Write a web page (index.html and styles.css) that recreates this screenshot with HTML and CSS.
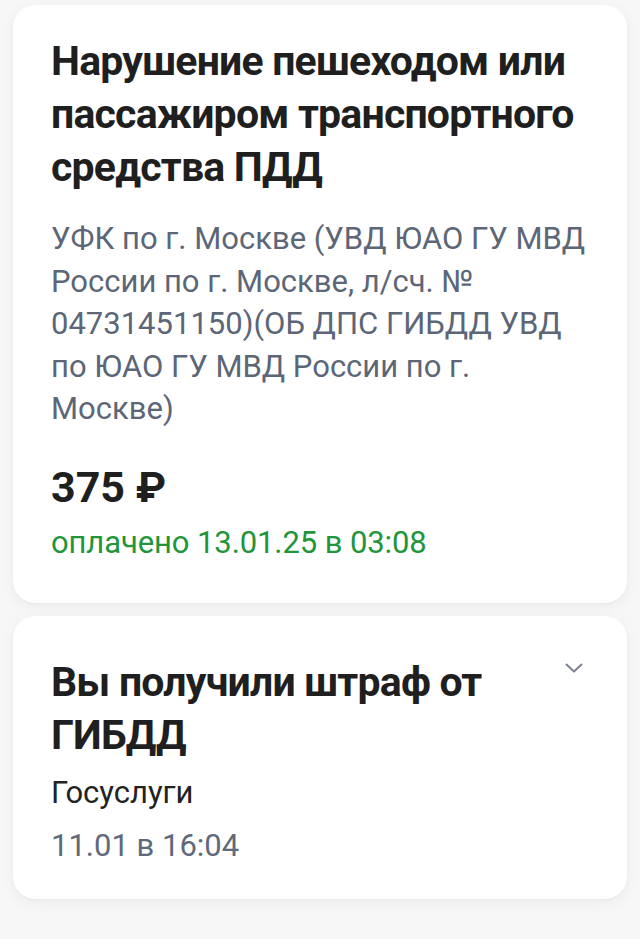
FILE: index.html
```html
<!DOCTYPE html>
<html lang="ru">
<head>
<meta charset="utf-8">
<title>Штраф</title>
<link rel="stylesheet" href="styles.css">
</head>
<body>
<main class="feed">
  <section class="card card-payment">
    <h1 class="title">Нарушение пешеходом или пассажиром транспортного средства ПДД</h1>
    <p class="recipient">УФК по г. Москве (УВД ЮАО ГУ МВД России по г. Москве, л/сч. № 04731451150)(ОБ ДПС ГИБДД УВД по ЮАО ГУ МВД России по г. Москве)</p>
    <p class="amount">375 ₽</p>
    <p class="status">оплачено 13.01.25 в 03:08</p>
  </section>
  <section class="card card-notice">
    <div class="notice-head">
      <h2 class="title">Вы получили штраф от ГИБДД</h2>
      <svg class="chevron" viewBox="0 0 18 10" width="18" height="10" aria-hidden="true">
        <path d="M1.5 1.5 L9 8.5 L16.5 1.5" fill="none" stroke="#7d8290" stroke-width="2" stroke-linecap="round" stroke-linejoin="round"/>
      </svg>
    </div>
    <p class="source">Госуслуги</p>
    <p class="date">11.01 в 16:04</p>
  </section>
</main>
</body>
</html>
```

FILE: styles.css
```css
html, body {
  margin: 0;
  padding: 0;
}
body {
  background: #f7f7f7;
  font-family: Roboto, "Noto Sans", "Liberation Sans", sans-serif;
  color: #1f1f1f;
  width: 640px;
  height: 939px;
  overflow: hidden;
}
.feed {
  display: flex;
  flex-direction: column;
  gap: 13px;
  padding: 5px 13px 0 13px;
}
.card {
  background: #ffffff;
  border-radius: 22px;
  box-shadow: 0 4px 14px rgba(0, 0, 0, 0.05), 0 1px 3px rgba(0, 0, 0, 0.03);
  padding: 30px 38px 39px 38px;
}
.card p, .card h1, .card h2 {
  margin: 0;
}
.title {
  font-size: 41px;
  font-weight: 700;
  line-height: 53px;
  color: #1f1f1f;
  letter-spacing: -0.8px;
}
.recipient {
  margin-top: 24px !important;
  font-size: 31px;
  line-height: 42.5px;
  color: #5c6677;
}
.amount {
  margin-top: 34px !important;
  font-size: 43px;
  font-weight: 700;
  line-height: 44px;
  color: #1f1f1f;
}
.status {
  margin-top: 13px !important;
  font-size: 31px;
  line-height: 42px;
  letter-spacing: -0.1px;
  color: #22953a;
}
.card-notice {
  padding-top: 40px;
  padding-bottom: 32px;
}
.notice-head {
  display: flex;
  align-items: flex-start;
  gap: 20px;
}
.notice-head .title {
  flex: 1;
  padding-right: 40px;
}
.chevron {
  flex: none;
  margin-top: 7px;
  margin-right: 6px;
}
.source {
  margin-top: 10px !important;
  font-size: 31px;
  line-height: 42px;
  color: #222222;
}
.date {
  margin-top: 11px !important;
  font-size: 31px;
  line-height: 42px;
  color: #5f6a7b;
}
```
